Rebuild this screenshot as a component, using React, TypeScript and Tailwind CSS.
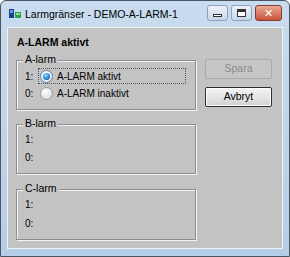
import React from "react";

function Radio({ checked }: { checked: boolean }) {
  return (
    <svg width="13" height="13" viewBox="0 0 13 13" className="shrink-0">
      <defs>
        <radialGradient id={checked ? "rgc" : "rgu"} cx="40%" cy="35%" r="70%">
          <stop offset="0%" stopColor="#ffffff" />
          <stop offset="100%" stopColor={checked ? "#dfe8f0" : "#d8d8d8"} />
        </radialGradient>
        <radialGradient id="dot" cx="40%" cy="35%" r="70%">
          <stop offset="0%" stopColor="#a8dcff" />
          <stop offset="60%" stopColor="#2e8fd8" />
          <stop offset="100%" stopColor="#1b5fa8" />
        </radialGradient>
      </defs>
      <circle cx="6.5" cy="6.5" r="6" fill={`url(#${checked ? "rgc" : "rgu"})`} stroke={checked ? "#5b7fa0" : "#9a9a9a"} strokeWidth="1" />
      {checked && <circle cx="6.5" cy="6.5" r="3.6" fill="url(#dot)" />}
    </svg>
  );
}

function Group({ label, children, className }: { label: string; children: React.ReactNode; className?: string }) {
  return (
    <div className={`relative border border-[#8e8e8e] shadow-[inset_1px_1px_0_#f4f4f4,1px_1px_0_#f4f4f4] ${className ?? ""}`}>
      <span className="absolute left-[6px] top-[-8px] bg-[#c3c3c3] px-[2px] leading-[13px] text-[10.5px] text-black">{label}</span>
      {children}
    </div>
  );
}

export default function App() {
  const font = { fontFamily: '"Liberation Sans", Arial, sans-serif' };
  return (
    <div className="w-[290px] h-[257px] bg-white" style={font}>
      <div className="w-[290px] h-[257px] flex flex-col rounded-t-[6px] border border-[#4a5562] bg-gradient-to-b from-[#c9dcef] to-[#b5cde6]">
        {/* title bar */}
        <div className="h-[26px] flex items-start shrink-0">
          <div className="mt-[7px] ml-[8px] w-[12px] h-[11px]">
            <svg width="12" height="11" viewBox="0 0 12 11">
              <rect x="0" y="1" width="5" height="9" fill="#1d3f8f" />
              <rect x="1" y="2" width="3" height="3" fill="#5aa0e8" />
              <rect x="6" y="4" width="6" height="6" fill="#2f9d4a" />
              <rect x="7" y="5" width="4" height="2" fill="#8fe08f" />
            </svg>
          </div>
          <span className="ml-[4px] mt-[6px] text-[10.5px] leading-[14px] text-black">
            Larmgränser - DEMO-A-LARM-1
          </span>
          <div className="ml-auto mr-[7px] mt-[4px] flex gap-[3px]">
            <div className="w-[21px] h-[16px] rounded-[3px] border border-[#8aa2bd] bg-gradient-to-b from-[#eef3fa] to-[#c6d6e9] flex items-center justify-center">
              <div className="w-[9px] h-[3px] mt-[4px] border border-[#333] bg-white" />
            </div>
            <div className="w-[21px] h-[16px] rounded-[3px] border border-[#8aa2bd] bg-gradient-to-b from-[#eef3fa] to-[#c6d6e9] flex items-center justify-center">
              <div className="w-[9px] h-[8px] border border-[#333] border-t-[3px] bg-white" />
            </div>
            <div className="w-[27px] h-[16px] rounded-[3px] border border-[#8a3a30] bg-gradient-to-b from-[#eaa996] to-[#c8503a] flex items-center justify-center text-white font-bold text-[11px] leading-none" style={{ fontFamily: '"DejaVu Sans", sans-serif' }}>
              ✕
            </div>
          </div>
        </div>
        {/* client */}
        <div className="flex-1 mx-[6px] mb-[7px] border border-[#eef3f8] bg-[#c3c3c3] flex text-[10px] text-black">
          <div className="ml-[8px] mt-[7px] w-[180px] flex flex-col">
            <div className="font-bold text-[10.5px] leading-[14px] ml-[1px]">A-LARM aktivt</div>
            <Group label="A-larm" className="mt-[11px] h-[50px]">
              <div className="flex flex-col pt-[7px]">
                <div className="flex items-center h-[16px]">
                  <span className="ml-[8px] w-[12px]">1:</span>
                  <div className="ml-[1px] flex items-center gap-[4px] h-[16px] w-[148px] border border-dotted border-[#555] pl-[1px]">
                    <Radio checked />
                    <span>A-LARM aktivt</span>
                  </div>
                </div>
                <div className="flex items-center h-[17px] mt-[1px]">
                  <span className="ml-[8px] w-[12px]">0:</span>
                  <div className="ml-[2px] flex items-center gap-[4px] pl-[1px]">
                    <Radio checked={false} />
                    <span>A-LARM inaktivt</span>
                  </div>
                </div>
              </div>
            </Group>
            <Group label="B-larm" className="mt-[14px] h-[50px]">
              <div className="flex flex-col pl-[8px] pt-[8px] gap-[5px] leading-[13px]">
                <span>1:</span>
                <span>0:</span>
              </div>
            </Group>
            <Group label="C-larm" className="mt-[15px] h-[51px]">
              <div className="flex flex-col pl-[8px] pt-[8px] gap-[6px] leading-[13px]">
                <span>1:</span>
                <span>0:</span>
              </div>
            </Group>
          </div>
          <div className="ml-[9px] mt-[31px] flex flex-col gap-[8px]">
            <div className="w-[67px] h-[20px] rounded-[2px] border border-[#a9a9a9] bg-[#c6c6c6] flex items-center justify-center text-[#8a8a8a] text-[10.5px]">
              Spara
            </div>
            <div className="w-[67px] h-[20px] rounded-[2px] border border-[#2d2d2d] bg-gradient-to-b from-[#f4f4f4] via-[#e6e6e6] to-[#d0d0d0] shadow-[inset_0_0_0_1px_#ffffff] flex items-center justify-center text-[10.5px]">
              Avbryt
            </div>
          </div>
        </div>
      </div>
    </div>
  );
}
